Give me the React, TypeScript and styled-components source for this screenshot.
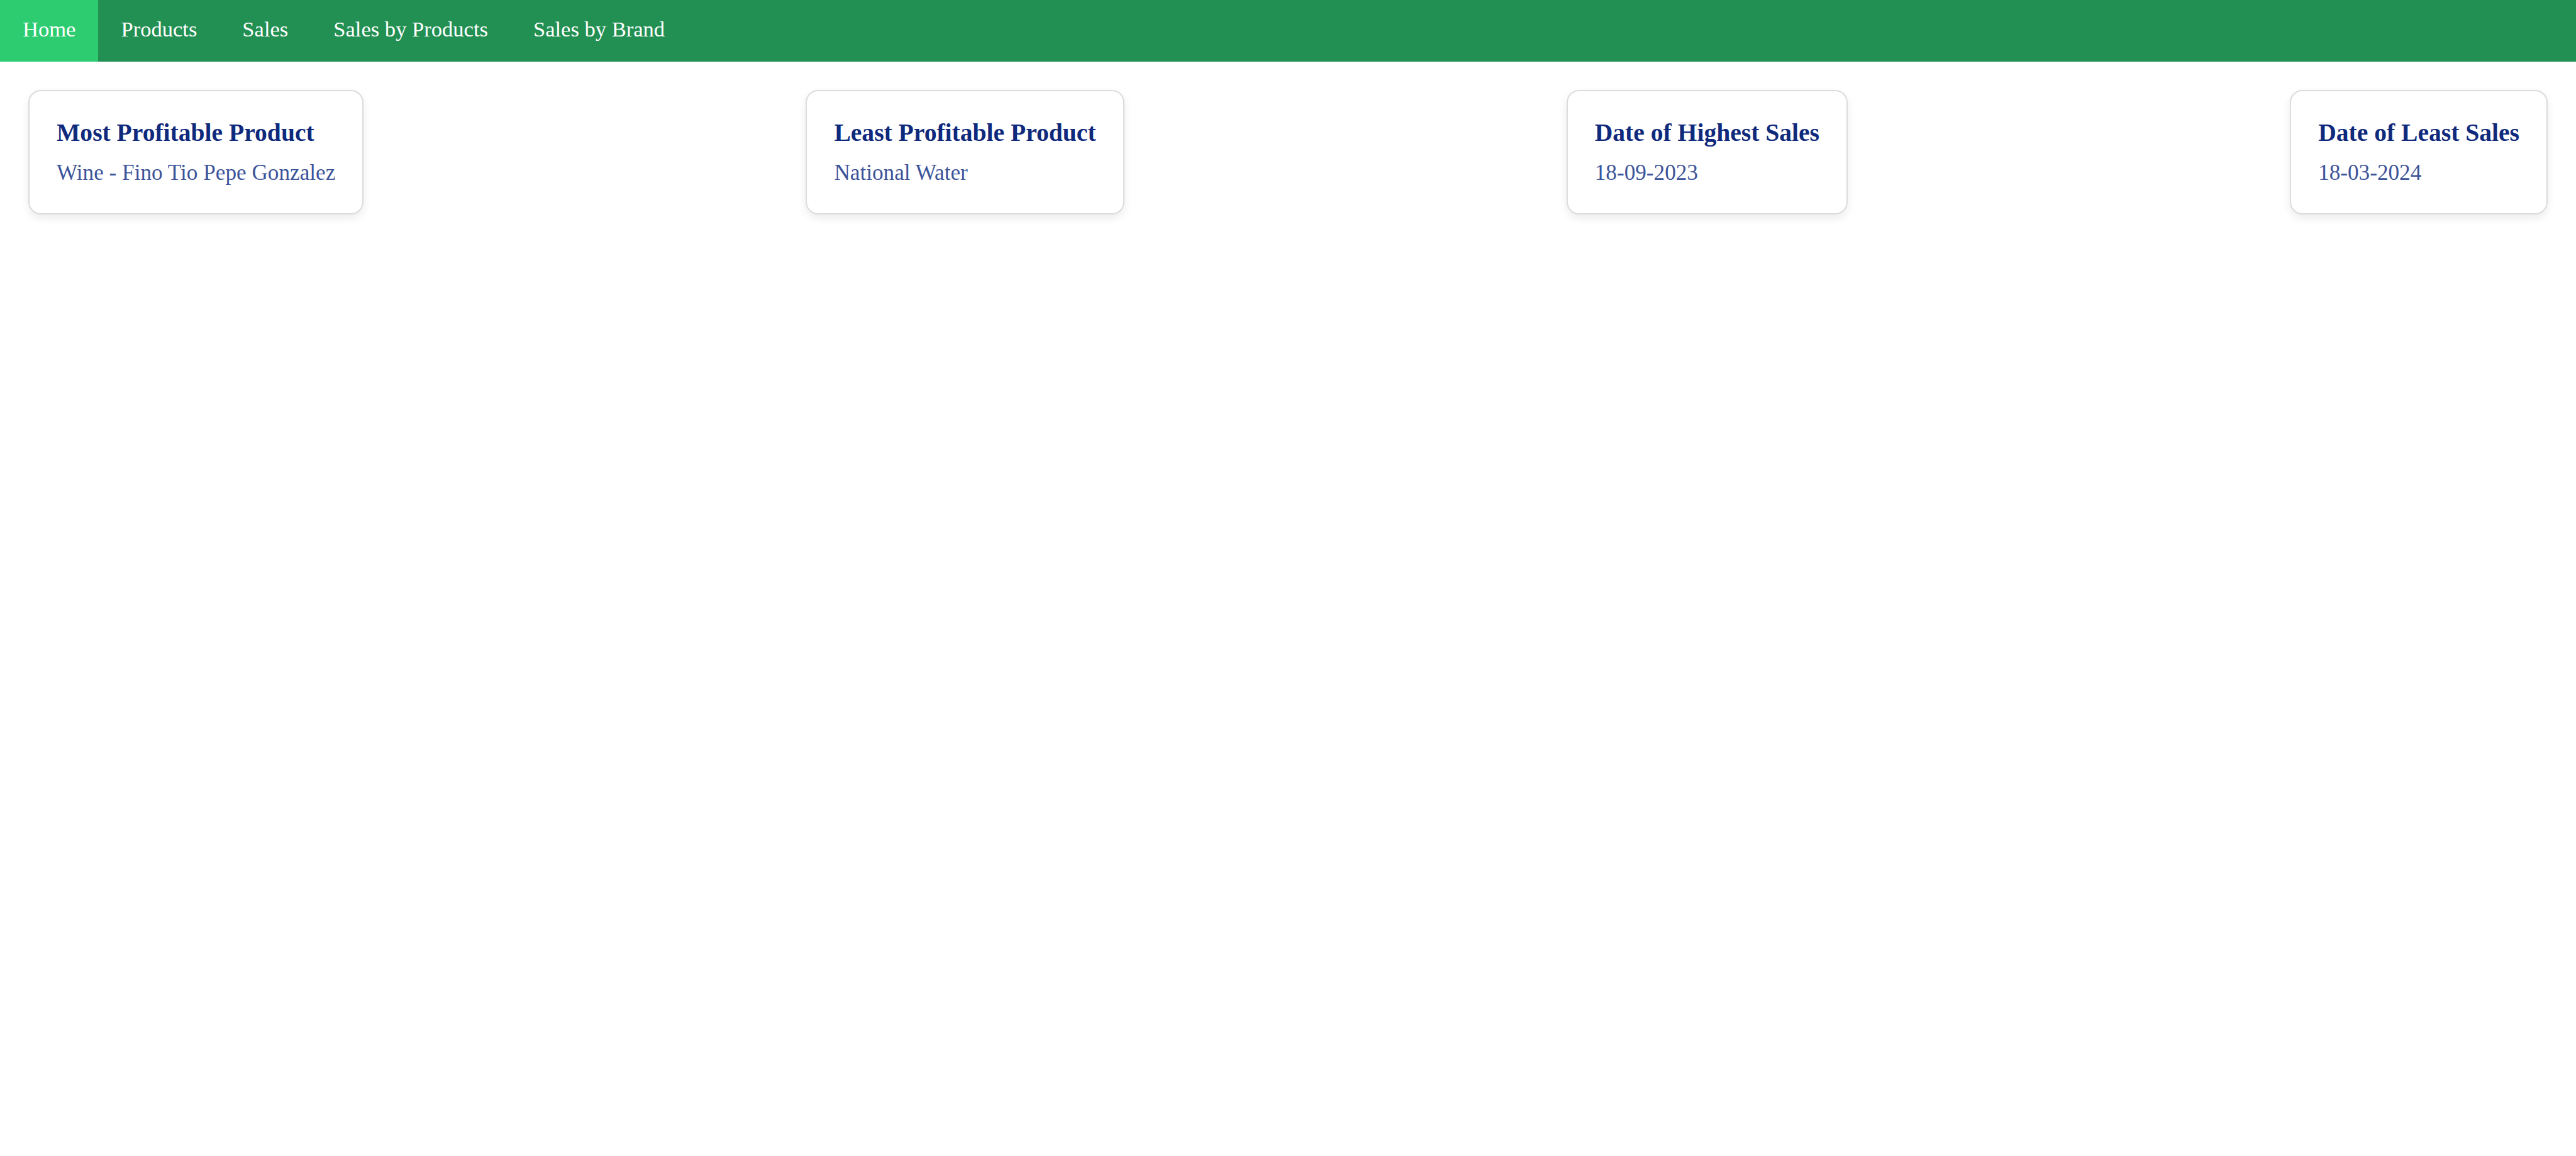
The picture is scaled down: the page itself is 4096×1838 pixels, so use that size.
import React from 'react';
import styled, { createGlobalStyle } from 'styled-components';

const GlobalStyle = createGlobalStyle`
    html, body {
        margin: 0;
        padding: 0;
        background: #ffffff;
    }
    body {
        font-family: "Liberation Serif", "Times New Roman", serif;
        font-size: 34.56px;
    }
`;

const StyledTopNav = styled.nav`
    display: flex;
    background: #239053;
    height: 98px;
`;

const StyledNavLink = styled.a<{ active?: boolean }>`
    display: block;
    padding: 26px 36px 0;
    line-height: 40px;
    color: #ffffff;
    text-decoration: none;
    font-size: 34.56px;
    background: ${props => props.active ? '#2ecc71' : 'transparent'};
    cursor: pointer;
    &:hover {
        background: ${props => props.active ? '#2ecc71' : '#2aa05e'};
    }
`;

const StyledCardRow = styled.div`
    display: flex;
    justify-content: space-between;
    align-items: flex-start;
    padding: 45px 45px;
`;

const StyledCard = styled.div`
    background: #ffffff;
    border: 2px solid #dcdcdc;
    border-radius: 20px;
    box-shadow: 0 6px 14px rgba(0, 0, 0, 0.08);
    padding: 43px 43px 44px;
`;

const StyledCardTitle = styled.h3`
    margin: 0 0 21px;
    font-size: 39.6px;
    font-weight: bold;
    color: #0f2a7c;
    white-space: nowrap;
`;

const StyledCardValue = styled.p`
    margin: 0;
    font-size: 35.2px;
    color: #3c5499;
    white-space: nowrap;
`;

const links = ['Home', 'Products', 'Sales', 'Sales by Products', 'Sales by Brand'];

const stats = [
    { title: 'Most Profitable Product', value: 'Wine - Fino Tio Pepe Gonzalez' },
    { title: 'Least Profitable Product', value: 'National Water' },
    { title: 'Date of Highest Sales', value: '18-09-2023' },
    { title: 'Date of Least Sales', value: '18-03-2024' },
];

export default function App() {
    return (
        <>
            <GlobalStyle />
            <StyledTopNav>
                {links.map(link => (
                    <StyledNavLink key={link} active={link === 'Home'}>{link}</StyledNavLink>
                ))}
            </StyledTopNav>
            <StyledCardRow>
                {stats.map(stat => (
                    <StyledCard key={stat.title}>
                        <StyledCardTitle>{stat.title}</StyledCardTitle>
                        <StyledCardValue>{stat.value}</StyledCardValue>
                    </StyledCard>
                ))}
            </StyledCardRow>
        </>
    );
}
